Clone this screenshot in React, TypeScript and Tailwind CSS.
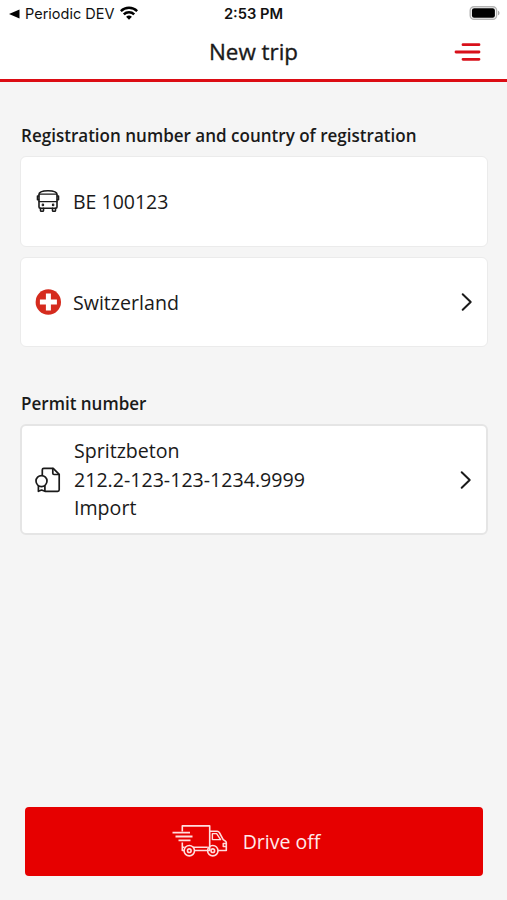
import React from 'react';

const BusIcon = () => (
  <svg className="w-6 h-6 -mt-px" viewBox="0 0 24 24" fill="none" stroke="#1a1a1a" strokeWidth="1.6" strokeLinecap="round" strokeLinejoin="round">
    <path d="M3 18V5.5C3 2.6 6 1.7 12 1.7s9 .9 9 3.8V18c0 .8-.4 1.2-1.2 1.2H4.2C3.4 19.2 3 18.8 3 18Z" />
    <path d="M3.2 5.2h17.6M3 12.6h18" strokeWidth="1.3" />
    <path d="M2.6 7H1.5v3.8h1.1M21.4 7h1.1v3.8h-1.1" />
    <path d="M4.5 19.3v2.2c0 .5.3.8.8.8h1.4c.5 0 .8-.3.8-.8v-2.2M16.5 19.3v2.2c0 .5.3.8.8.8h1.4c.5 0 .8-.3.8-.8v-2.2" />
    <circle cx="6.9" cy="15.9" r=".5" />
    <circle cx="17.1" cy="15.9" r=".5" />
  </svg>
);

const SwissFlag = () => (
  <svg className="w-[26px] h-[26px]" viewBox="0 0 26 26">
    <circle cx="13.3" cy="13" r="12.7" fill="#d52b1e" />
    <path d="M10.9 4.5h5v6h6v5h-6v6h-5v-6h-6v-5h6z" fill="#fff" />
  </svg>
);

const PermitIcon = () => (
  <svg className="w-[26px] h-[26px]" viewBox="0 0 26 26" fill="none" stroke="#1a1a1a" strokeWidth="1.7" strokeLinecap="round" strokeLinejoin="round">
    <path d="M7.3 8V2.8c0-1 .5-1.5 1.5-1.5h9.4l6 6v15.5c0 1-.5 1.5-1.5 1.5H10.5" />
    <path d="M17.8 1.5v4.8c0 .8.4 1.2 1.2 1.2h5" />
    <circle cx="6.5" cy="14.1" r="5.5" />
    <path d="M3.4 19v5.3l3.2-1.3 3.3 1.3V19" />
  </svg>
);

const TruckIcon = () => (
  <svg className="w-[56px] h-[34px] -mt-px" viewBox="0 0 56 34" fill="none" stroke="#ffdede" strokeWidth="1.6" strokeLinejoin="round">
    <path d="M10.3 7.5V1.9h27.4v24.6H22M10.3 18.5v8h1.7" />
    <path d="M.5 8.7h17.5M3.5 12.5h17M6.5 16.3h12" strokeWidth="1.8" />
    <path d="M10.5 23.2h2M21 23.2h14.8" />
    <path d="M37.7 7.2h7.5c1 0 1.7.5 2.2 1.4l3.8 7 2.2 1.5c.6.4.9.9.9 1.6v7.8h-8.6" />
    <path d="M40.4 9.6h4.2l4 6h-8.2zM54 19.5h-2.8v3H54" strokeWidth="1.4" />
    <circle cx="17.3" cy="26.7" r="5.2" />
    <circle cx="17.3" cy="26.7" r="1.8" />
    <circle cx="40.8" cy="26.7" r="5.2" />
    <circle cx="40.8" cy="26.7" r="1.8" />
  </svg>
);

const Chevron = () => (
  <svg className="w-3 h-5" viewBox="0 0 12 20" fill="none" stroke="#1a1a1a" strokeWidth="2" strokeLinecap="round" strokeLinejoin="round">
    <path d="M1.7 2.2 9.7 10l-8 7.8" />
  </svg>
);

const StatusBar = () => (
  <div className="h-7 grid grid-cols-3 items-center pl-[9px] pr-[7px] font-['Inter',sans-serif] text-[#111]">
    <div className="flex items-center text-[14.5px] whitespace-nowrap">
      <svg className="w-[11px] h-[10px] mr-[5px]" viewBox="0 0 11 10">
        <path d="M0 5 10.5.5v9z" fill="#000" />
      </svg>
      <span>Periodic DEV</span>
      <svg className="w-[18px] h-[14px] ml-[6px] -mt-0.5" viewBox="0 0 18 14" fill="none" stroke="#000" strokeWidth="2.5">
        <path d="M.8 5.1a11.7 11.7 0 0 1 16.4 0M3.8 8.3a7.4 7.4 0 0 1 10.4 0" />
        <path d="M6.1 10.8a4.2 4.2 0 0 1 5.8 0L9 13.8z" fill="#000" stroke="none" />
      </svg>
    </div>
    <div className="-ml-0.5 text-center text-[14.7px] font-semibold">2:53 PM</div>
    <svg className="w-[31px] h-[14px] -mt-0.5 justify-self-end" viewBox="0 0 31 14">
      <rect x="1.2" y=".7" width="26.4" height="12.6" rx="3.8" fill="none" stroke="#b4b4b4" strokeWidth="1.4" />
      <rect x="2.9" y="2.3" width="23" height="9.4" rx="2.2" fill="#000" />
      <path d="M29 4.7c2 .7 2 3.9 0 4.6z" fill="#aaa" />
    </svg>
  </div>
);

export default function App() {
  return (
    <div className="w-[507px] h-[900px] flex flex-col overflow-hidden bg-[#f5f5f5] font-['Open_Sans','Noto_Sans',sans-serif] text-[#1a1a1a]">
      <header className="h-[82px] shrink-0 bg-white border-b-[3px] border-[#dc0c14]">
        <StatusBar />
        <div className="h-12 grid grid-cols-3 items-center">
          <h1 className="col-start-2 text-center text-[22.4px] font-medium [-webkit-text-stroke:0.35px_#1a1a1a]">New trip</h1>
          <svg className="w-[27px] h-[20px] justify-self-end mr-[26px]" viewBox="0 0 27 20" stroke="#d8101a" strokeWidth="2.8" strokeLinecap="round">
            <path d="M9 2.7h16M2 10h23M9 17.3h16" />
          </svg>
        </div>
      </header>

      <main className="flex-1 flex flex-col pl-[21px] pr-5">
        <h2 className="mt-[42px] h-6 leading-6 text-[17.05px] font-semibold">Registration number and country of registration</h2>
        <div className="mt-2 h-[91px] -ml-px w-[468px] shrink-0 flex items-center rounded-md border border-[#ebebeb] bg-white pl-[15px] pr-3.5">
          <BusIcon />
          <span className="ml-[13px] mt-px text-[19.5px]">BE 100123</span>
        </div>
        <div className="mt-[10px] h-[90px] -ml-px w-[468px] shrink-0 flex items-center rounded-md border border-[#ebebeb] bg-white pl-[14px] pr-3.5">
          <SwissFlag />
          <span className="ml-3 mt-0.5 flex-1 text-[19.6px]">Switzerland</span>
          <Chevron />
        </div>

        <h2 className="mt-[45px] h-6 leading-6 text-[17.05px] font-semibold">Permit number</h2>
        <div className="mt-2 h-[111px] -ml-px w-[468px] shrink-0 flex items-center rounded-md border-2 border-[#e5e5e5] bg-white pl-[13px] pr-3.5">
          <PermitIcon />
          <div className="ml-[13px] mt-px flex-1 text-[19.6px] leading-[28.5px]">
            <div>Spritzbeton</div>
            <div>212.2-123-123-1234.9999</div>
            <div>Import</div>
          </div>
          <Chevron />
        </div>

        <button className="mt-auto mb-6 ml-1 mr-[5px] h-[69px] w-[458px] shrink-0 flex items-center justify-center gap-[15px] rounded-[4px] bg-[#e60000] pr-4 text-[19.5px] text-[#ffeaea]">
          <TruckIcon />
          <span>Drive off</span>
        </button>
      </main>
    </div>
  );
}
